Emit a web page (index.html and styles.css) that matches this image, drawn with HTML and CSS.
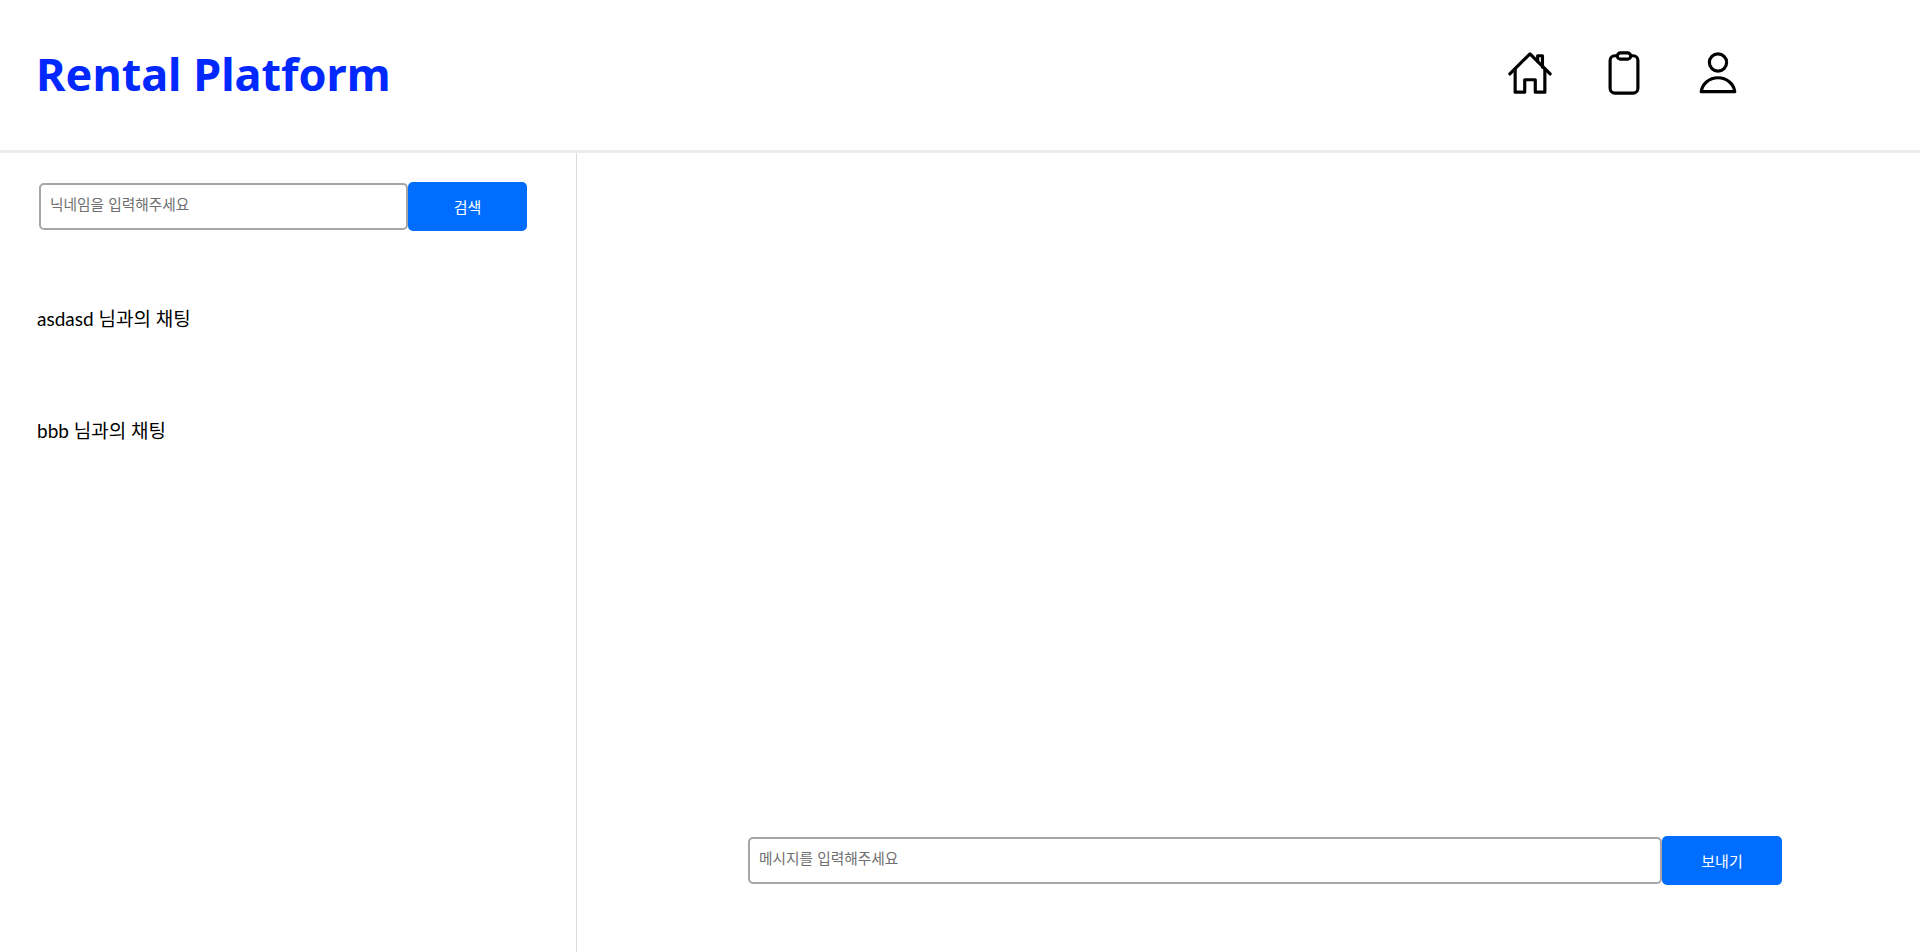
FILE: index.html
```html
<!DOCTYPE html>
<html lang="ko">
<head>
<meta charset="utf-8">
<title>Rental Platform</title>
<link rel="stylesheet" href="styles.css">
</head>
<body>
<header class="header">
  <h1 class="logo">Rental Platform</h1>
  <nav class="nav">
    <svg class="icon" viewBox="0 0 48 48" fill="none" stroke="#000" stroke-width="3.300" stroke-linecap="round" stroke-linejoin="round"><path d="M3 25 L24 4 L45 25"/><path d="M8.500 20 V44 H18.500 V31 H29.500 V44 H39.500 V20"/><path d="M32 12 V6 H37 V18" /></svg>
    <svg class="icon" viewBox="0 0 48 48" fill="none" stroke="#000" stroke-width="3.300" stroke-linecap="round" stroke-linejoin="round"><rect x="9.500" y="6" width="29" height="39" rx="5"/><rect x="17" y="3" width="14" height="6.500" rx="3.250" fill="#fff"/></svg>
    <svg class="icon" viewBox="0 0 48 48" fill="none" stroke="#000" stroke-width="3.300" stroke-linecap="round" stroke-linejoin="round"><circle cx="24" cy="13" r="9"/><path d="M6.500 43.500 C7.500 35 15 29 24 29 C33 29 40.500 35 41.500 43.500 Z"/></svg>
  </nav>
</header>
<main class="main">
  <aside class="sidebar">
    <form class="search">
      <input class="field" type="text" placeholder="닉네임을 입력해주세요">
      <button class="btn" type="button">검색</button>
    </form>
    <ul class="rooms">
      <li class="room">asdasd 님과의 채팅</li>
      <li class="room">bbb 님과의 채팅</li>
    </ul>
  </aside>
  <section class="chat">
    <form class="composer">
      <input class="field" type="text" placeholder="메시지를 입력해주세요">
      <button class="btn btn-send" type="button">보내기</button>
    </form>
  </section>
</main>
</body>
</html>
```
FILE: styles.css
```css
* { box-sizing: border-box; }
html, body { height: 100%; }
body {
  margin: 0;
  background: #fff;
  color: #000;
  font-family: "Noto Sans", "Noto Sans CJK KR", sans-serif;
  display: flex;
  flex-direction: column;
  overflow: hidden;
}
.header {
  flex: 0 0 153px;
  display: flex;
  align-items: center;
  justify-content: space-between;
  padding: 0 179px 0 36px;
  border-bottom: 3px solid #ececec;
}
.logo {
  margin: 0 0 3px;
  font-size: 45px;
  font-weight: 700;
  color: #0028ff;
  line-height: 1;
  font-family: "Noto Sans", sans-serif;
}
.nav {
  display: flex;
  gap: 48px;
  align-items: center;
  padding-bottom: 5px;
}
.icon { width: 46px; height: 46px; display: block; }
.main { flex: 1; display: flex; min-height: 0; }
.sidebar {
  flex: 0 0 577px;
  border-right: 1px solid #dcdcdc;
  padding: 29px 0 0 0;
}
.search {
  display: flex;
  align-items: center;
  margin-left: 39px;
  width: 488px;
}
.field {
  flex: 1;
  min-width: 0;
  height: 47px;
  border: 2px solid #a6a6a6;
  border-radius: 5px;
  padding: 0 9px 6px;
  font-family: "Noto Sans CJK KR", sans-serif;
  font-size: 14.700px;
  color: #000;
  background: #fff;
  outline: none;
}
.field::placeholder { color: #6f6f6f; opacity: 1; }
.btn {
  width: 119px;
  height: 49px;
  border: 0;
  border-radius: 5px;
  background: #006dff;
  color: #fff;
  font-family: "Noto Sans CJK KR", sans-serif;
  font-size: 15px;
  flex: none;
}
.btn-send { width: 120px; }
.rooms {
  list-style: none;
  margin: 0;
  padding: 0 0 0 37px;
}
.room {
  height: 112px;
  display: flex;
  align-items: center;
  font-size: 19px;
  line-height: 1;
  font-family: "Lato", "Noto Sans CJK KR", sans-serif;
}
.room:first-child { margin-top: 31px; }
.chat {
  flex: 1;
  display: flex;
  flex-direction: column;
  justify-content: flex-end;
  padding: 0 0 67px 171px;
}
.composer {
  display: flex;
  align-items: center;
  width: 1034px;
}
```
